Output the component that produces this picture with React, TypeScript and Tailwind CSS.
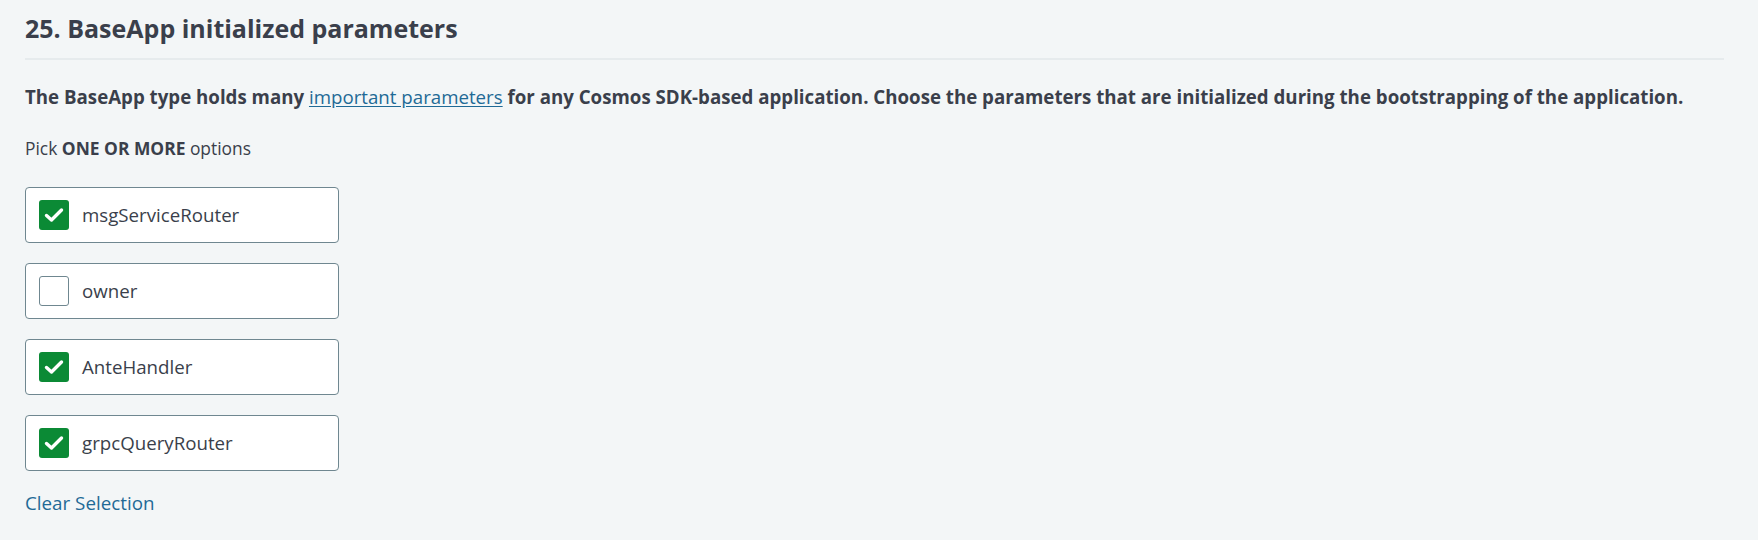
import React from "react";

const options = [
  { label: "msgServiceRouter", checked: true },
  { label: "owner", checked: false },
  { label: "AnteHandler", checked: true },
  { label: "grpcQueryRouter", checked: true },
];

function CheckBox({ checked }: { checked: boolean }) {
  if (!checked) {
    return <span className="w-[30px] h-[30px] rounded-[3px] border border-[#6f8790] bg-white shrink-0" />;
  }
  return (
    <span className="w-[30px] h-[30px] rounded-[3px] bg-[#0b8a35] shrink-0 flex items-center justify-center">
      <svg width="20" height="20" viewBox="0 0 20 20" fill="none">
        <path d="M2.5 10.5 L7.5 15 L17.5 5" stroke="white" strokeWidth="3.4" strokeLinecap="round" strokeLinejoin="round" />
      </svg>
    </span>
  );
}

export default function App() {
  return (
    <div
      className="min-h-[540px] bg-[#f3f6f7] px-[25px] pt-[6px] text-[#3a3f4b]"
      style={{ fontFamily: '"Open Sans", "Noto Sans", sans-serif' }}
    >
      {/* Title */}
      <h1 className="text-[25px] font-bold leading-[44px] pb-[8px] border-b-2 border-[#e6ebed] mr-[9px]">
        25. BaseApp initialized parameters
      </h1>

      {/* Question */}
      <p className="mt-[23px] text-[18.7px] font-bold leading-[28px]">
        The BaseApp type holds many{" "}
        <a href="#" className="font-normal text-[#1f6a96] underline underline-offset-2">
          important parameters
        </a>{" "}
        for any Cosmos SDK-based application. Choose the parameters that are initialized during the bootstrapping of
        the application.
      </p>

      <p className="mt-[25px] text-[17.4px] leading-[24px]">
        Pick <span className="font-bold">ONE OR MORE</span> options
      </p>

      {/* Options */}
      <div className="mt-[27px] flex flex-col gap-[20px]">
        {options.map((o) => (
          <label
            key={o.label}
            className="w-[314px] h-[56px] flex items-center gap-[13px] pl-[13px] bg-white border border-[#6f8790] rounded-[4px] cursor-pointer"
          >
            <CheckBox checked={o.checked} />
            <span className="text-[18.7px]">{o.label}</span>
          </label>
        ))}
      </div>

      <button className="mt-[18px] text-[18.8px] text-[#1f6a96] leading-[28px]">Clear Selection</button>
    </div>
  );
}
